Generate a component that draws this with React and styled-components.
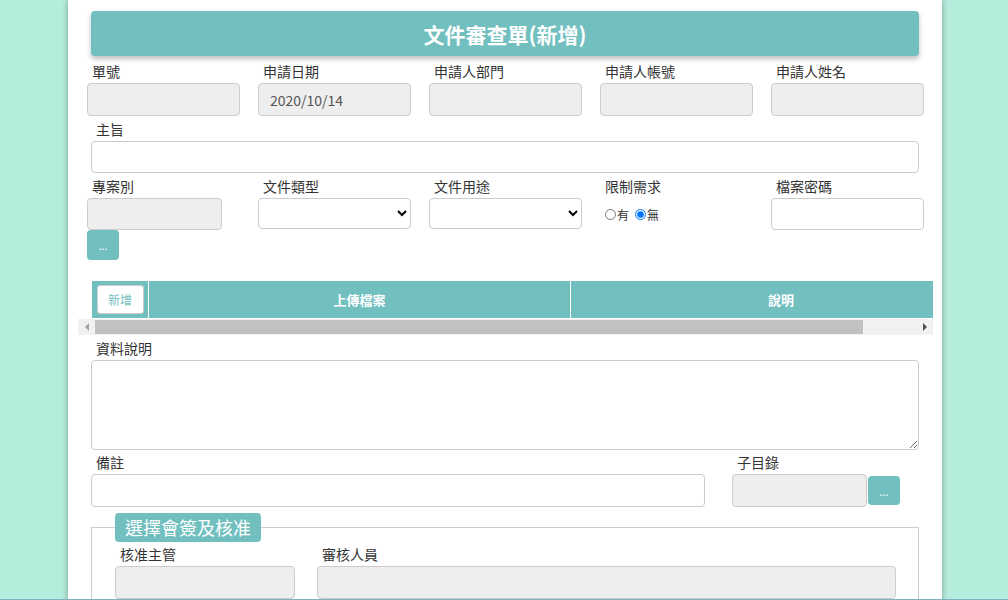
import React from "react";
import styled, { createGlobalStyle } from "styled-components";

const teal = "#72bfc0";

const Global = createGlobalStyle`
  html, body {
    margin: 0;
    padding: 0;
    background: #b5eddd;
    font-family: "Noto Sans CJK TC", "Noto Sans", sans-serif;
    color: #333;
  }
  * { box-sizing: border-box; }
`;

const Panel = styled.div`
  width: 874px;
  margin-left: 68px;
  min-height: 640px;
  background: #fff;
  box-shadow: 0 0 6px rgba(0, 0, 0, 0.35);
  padding: 11px 23px 0;
`;

const Title = styled.div`
  height: 45px;
  background: ${teal};
  border-radius: 4px;
  box-shadow: 0 3px 5px rgba(0, 0, 0, 0.25);
  color: #fff;
  font-size: 21px;
  font-weight: 700;
  display: flex;
  align-items: center;
  justify-content: center;
  margin-bottom: 5px;
`;

const Row = styled.div`
  display: grid;
  grid-template-columns: repeat(5, 171px);
  margin: 0 -13px;
  margin-bottom: 3px;
`;

const Col = styled.div`
  padding: 0 9px;
`;

const Label = styled.div`
  font-size: 14px;
  line-height: 20px;
  height: 20px;
  padding-left: 5px;
  margin-bottom: 2px;
  white-space: nowrap;
`;

const Input = styled.input`
  display: block;
  width: ${(p) => p.$w || "100%"};
  height: ${(p) => p.$h || 32}px;
  border: 1px solid #ccc;
  border-radius: 4px;
  background: ${(p) => (p.readOnly ? "#eee" : "#fff")};
  font-family: inherit;
  font-size: 14px;
  color: #555;
  padding: 0 11px;
  outline: none;
`;

const Select = styled.select`
  display: block;
  width: 100%;
  height: 31px;
  border: 1px solid #ccc;
  border-radius: 4px;
  background: #fff;
  font-family: inherit;
  font-size: 14px;
`;

const SmallBtn = styled.button`
  width: 32px;
  height: ${(p) => p.$h || 30}px;
  border: none;
  border-radius: 4px;
  background: ${teal};
  color: #fff;
  font-size: 11px;
  padding: 0;
  font-family: inherit;
  flex: none;
`;

const Radios = styled.div`
  display: flex;
  align-items: center;
  height: 32px;
  padding-left: 5px;
  font-size: 12px;
  gap: 6px;
  label {
    display: flex;
    align-items: center;
  }
  input {
    margin: 0 1px 0 0;
    width: 11px;
    height: 11px;
  }
`;

const FullField = styled.div`
  margin-top: ${(p) => p.$top || 0}px;
  margin-bottom: 3px;
`;

const ScrollBox = styled.div`
  margin: 21px -14px 0 -13px;
`;

const TableClip = styled.div`
  overflow: hidden;
  padding-left: 14px;
`;

const TableHead = styled.div`
  display: grid;
  grid-template-columns: 56px 421px 420px;
  gap: 1px;
  width: 899px;
  height: 37px;
  background: #fff;
`;

const HeadCell = styled.div`
  background: ${teal};
  color: #fff;
  font-size: 13px;
  font-weight: 700;
  display: flex;
  align-items: center;
  justify-content: center;
`;

const AddBtn = styled.button`
  width: 47px;
  height: 29px;
  background: #fff;
  border: 1px solid #ccc;
  border-radius: 3px;
  color: ${teal};
  font-size: 12px;
  font-family: inherit;
  padding: 0;
`;

const Scrollbar = styled.div`
  display: flex;
  height: 16px;
  background: #f1f1f1;
  margin-top: 1px;
`;

const Arrow = styled.div`
  width: 17px;
  display: flex;
  align-items: center;
  justify-content: center;
  &::after {
    content: "";
    border-top: 4px solid transparent;
    border-bottom: 4px solid transparent;
    ${(p) =>
      p.$dir === "left"
        ? "border-right: 4px solid #a3a3a3;"
        : "border-left: 4px solid #505050;"}
  }
`;

const Track = styled.div`
  flex: 1;
  padding: 1px 0;
  display: flex;
`;

const Thumb = styled.div`
  width: 768px;
  background: #c1c1c1;
`;

const TextArea = styled.textarea`
  display: block;
  width: 100%;
  height: 90px;
  border: 1px solid #ccc;
  border-radius: 4px;
  resize: vertical;
  font-family: inherit;
  margin-bottom: -1px;
`;

const NoteRow = styled.div`
  display: flex;
  gap: 27px;
`;

const InlineGroup = styled.div`
  display: flex;
  align-items: flex-start;
  gap: 1px;
  button {
    margin-top: 2px;
  }
`;

const Fieldset = styled.fieldset`
  margin: 6px 0 0;
  border: 1px solid #ccc;
  padding: 0 22px 10px 23px;
  min-width: 0;
`;

const Legend = styled.legend`
  background: ${teal};
  color: #fff;
  font-size: 18px;
  line-height: 29px;
  height: 29px;
  padding: 0 10px;
  border-radius: 4px;
  margin-left: 0;
`;

const SignRow = styled.div`
  display: flex;
  gap: 22px;
  margin-top: 2px;
`;

const BottomLine = styled.div`
  position: fixed;
  left: 0;
  right: 0;
  bottom: 0;
  height: 1px;
  background: #7fb0c6;
`;

const Field = ({ label, children }) => (
  <Col>
    <Label>{label}</Label>
    {children}
  </Col>
);

export default function App() {
  return (
    <>
      <Global />
      <Panel>
        <Title>文件審查單(新增)</Title>

        <Row>
          <Field label="單號">
            <Input readOnly $h={33} />
          </Field>
          <Field label="申請日期">
            <Input readOnly $h={33} defaultValue="2020/10/14" />
          </Field>
          <Field label="申請人部門">
            <Input readOnly $h={33} />
          </Field>
          <Field label="申請人帳號">
            <Input readOnly $h={33} />
          </Field>
          <Field label="申請人姓名">
            <Input readOnly $h={33} />
          </Field>
        </Row>

        <FullField>
          <Label>主旨</Label>
          <Input />
        </FullField>

        <Row>
          <Field label="專案別">
            <Input readOnly $w="135px" />
            <SmallBtn>...</SmallBtn>
          </Field>
          <Field label="文件類型">
            <Select />
          </Field>
          <Field label="文件用途">
            <Select />
          </Field>
          <Field label="限制需求">
            <Radios>
              <label>
                <input type="radio" name="limit" />有
              </label>
              <label>
                <input type="radio" name="limit" defaultChecked />無
              </label>
            </Radios>
          </Field>
          <Field label="檔案密碼">
            <Input />
          </Field>
        </Row>

        <ScrollBox>
          <TableClip>
            <TableHead>
              <HeadCell>
                <AddBtn>新增</AddBtn>
              </HeadCell>
              <HeadCell>上傳檔案</HeadCell>
              <HeadCell>說明</HeadCell>
            </TableHead>
          </TableClip>
          <Scrollbar>
            <Arrow $dir="left" />
            <Track>
              <Thumb />
            </Track>
            <Arrow $dir="right" />
          </Scrollbar>
        </ScrollBox>

        <FullField $top={3}>
          <Label>資料說明</Label>
          <TextArea />
        </FullField>

        <NoteRow>
          <div style={{ width: 614 }}>
            <Label>備註</Label>
            <Input $h={33} />
          </div>
          <div>
            <Label>子目錄</Label>
            <InlineGroup>
              <Input readOnly $w="135px" $h={33} />
              <SmallBtn $h={29}>...</SmallBtn>
            </InlineGroup>
          </div>
        </NoteRow>

        <Fieldset>
          <Legend>選擇會簽及核准</Legend>
          <SignRow>
            <div style={{ width: 180 }}>
              <Label>核准主管</Label>
              <Input readOnly $h={33} />
            </div>
            <div style={{ flex: 1 }}>
              <Label>審核人員</Label>
              <Input readOnly $h={33} />
            </div>
          </SignRow>
        </Fieldset>
      </Panel>
      <BottomLine />
    </>
  );
}
